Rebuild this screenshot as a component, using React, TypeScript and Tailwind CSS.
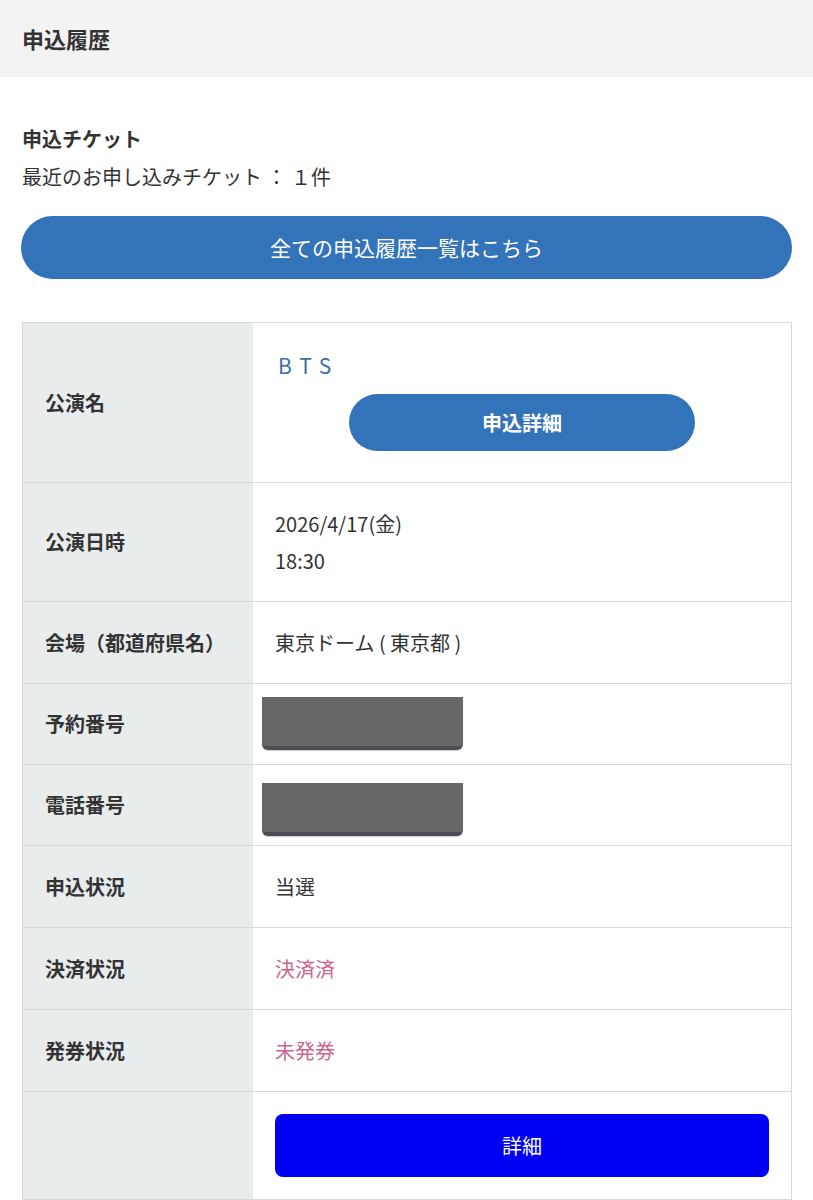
import React from "react";

const FONT = { fontFamily: '"Noto Sans CJK JP", "Noto Sans", sans-serif' };

interface RowProps {
  label?: string;
  children: React.ReactNode;
  cellClass?: string;
}

const Row: React.FC<RowProps> = ({ label, children, cellClass }) => (
  <div className="grid grid-cols-[230px_1fr] border-t border-[#d3dadd] first:border-t-0">
    <div className="bg-[#e8eced] flex items-center pl-[22px] text-[20px] font-bold text-[#333]">{label}</div>
    <div className={cellClass ?? "pl-[22px] py-[23px] text-[20px] leading-[35px] text-[#333]"}>{children}</div>
  </div>
);

const Redacted: React.FC = () => (
  <div className="w-[201px] h-[53px] bg-[#676767] rounded-b-[6px] border-b-[4px] border-[#4c4c55] shadow-[0_1px_1px_rgba(0,0,0,0.2)]" />
);

const App: React.FC = () => {
  return (
    <div className="w-[813px] min-h-[1200px] bg-white" style={FONT}>
      <div className="h-[77px] bg-[#f3f3f3] flex items-center px-[22px]">
        <h1 className="text-[22px] font-bold text-[#333]">申込履歴</h1>
      </div>

      <div className="px-[22px] pt-[44px]">
        <h2 className="text-[20px] font-bold text-[#333] leading-[36px]">申込チケット</h2>
        <p className="text-[20px] text-[#333] leading-[40px]">最近のお申し込みチケット ： １件</p>

        <button className="mt-[19px] w-[771px] -ml-px h-[63px] rounded-full bg-[#3273b9] text-white text-[21px] flex items-center justify-center">
          全ての申込履歴一覧はこちら
        </button>

        <div className="mt-[43px] border border-[#d3dadd] w-[770px]">
          <Row label="公演名" cellClass="pl-[22px] pt-[25px] pb-[31px]">
            <div className="text-[21px] leading-[35px] tracking-[0.38em] text-[#3a6fa5] pl-[3px]">BTS</div>
            <div className="flex justify-center mt-[11px] pr-[22px]">
              <button className="w-[346px] h-[57px] rounded-full bg-[#3273b9] text-white text-[20px] font-bold">申込詳細</button>
            </div>
          </Row>
          <Row label="公演日時" cellClass="pl-[22px] py-[22px] text-[20px] leading-[37px] text-[#333]">
            <div>2026/4/17(金)</div>
            <div>18:30</div>
          </Row>
          <Row label="会場（都道府県名）">東京ドーム ( 東京都 )</Row>
          <Row label="予約番号" cellClass="pl-[9px] pt-[13px] pb-[14px]">
            <Redacted />
          </Row>
          <Row label="電話番号" cellClass="pl-[9px] pt-[18px] pb-[9px]">
            <Redacted />
          </Row>
          <Row label="申込状況">当選</Row>
          <Row label="決済状況">
            <span className="text-[#cc6690]">決済済</span>
          </Row>
          <Row label="発券状況">
            <span className="text-[#cc6690]">未発券</span>
          </Row>
          <Row cellClass="pl-[22px] pr-[22px] pt-[22px] pb-[22px]">
            <button className="w-full h-[63px] rounded-[8px] bg-[#0000f5] text-white text-[20px]">詳細</button>
          </Row>
        </div>
      </div>
    </div>
  );
};

export default App;
